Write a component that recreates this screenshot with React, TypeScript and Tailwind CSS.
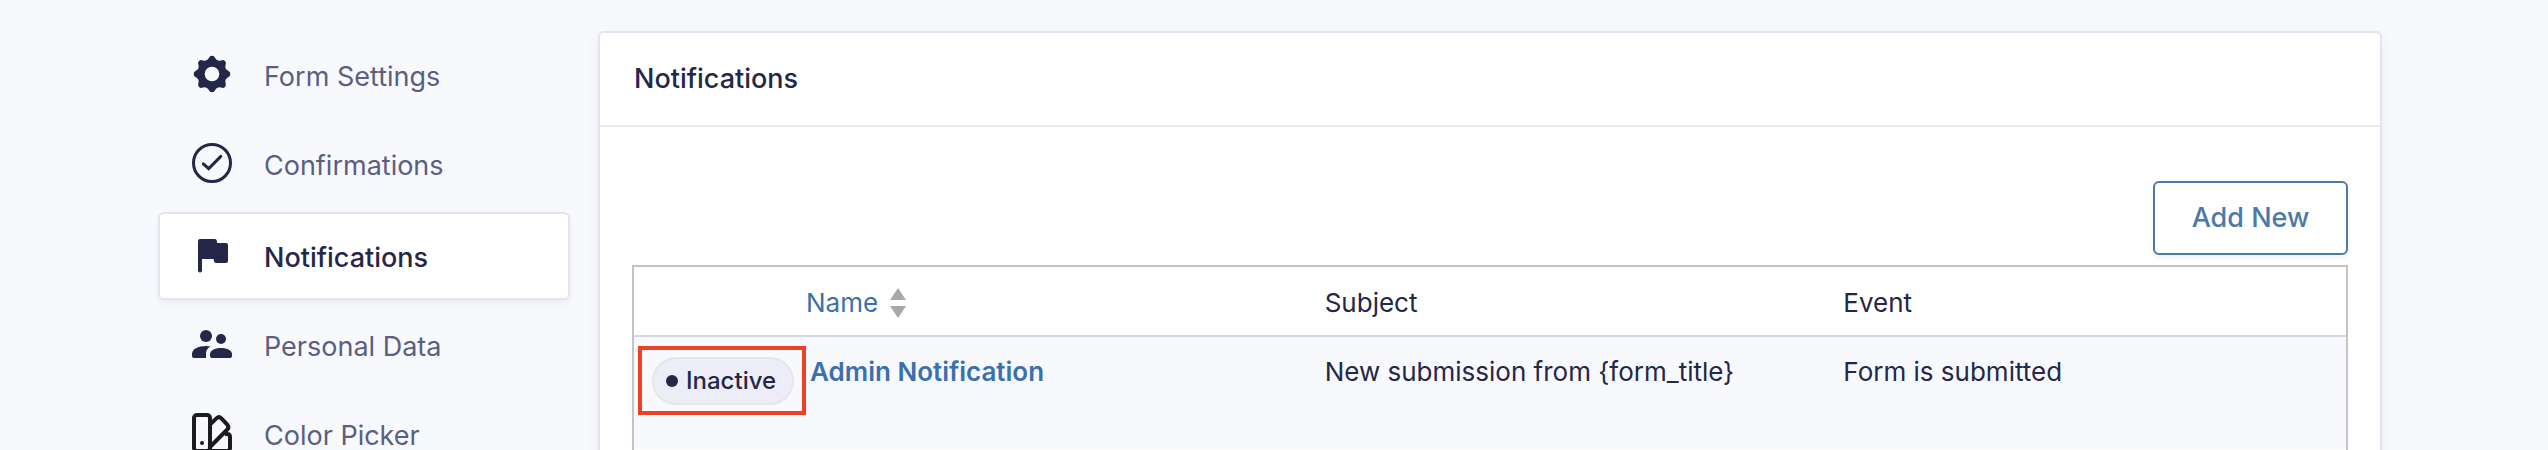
import { ReactNode } from "react";
import clsx from "clsx";

const GEAR_TEETH = 8;

const gearPath = () => {
  const point = (deg: number, r: number) => {
    const rad = (deg * Math.PI) / 180;
    return `${(24 + r * Math.sin(rad)).toFixed(2)} ${(23 - r * Math.cos(rad)).toFixed(2)}`;
  };
  let d = `M${point(-11, 16.4)}`;
  for (let i = 0; i < GEAR_TEETH; i++) {
    const a = i * 45;
    d += `A3.3 3.3 0 0 1 ${point(a + 11, 16.4)}Q${point(a + 22.5, 13.4)} ${point(a + 34, 16.4)}`;
  }
  return `${d}ZM24 15.7a7.3 7.3 0 1 0 0 14.6a7.3 7.3 0 1 0 0-14.6Z`;
};

const Icon = ({ children }: { children: ReactNode }) => (
  <svg viewBox="0 0 48 48" className="h-12 w-12 shrink-0 text-[#242748]" fill="currentColor" aria-hidden="true">
    {children}
  </svg>
);

const navItems = [
  {
    label: "Form Settings",
    icon: (
      <Icon>
        <path fillRule="evenodd" d={gearPath()} />
      </Icon>
    ),
  },
  {
    label: "Confirmations",
    icon: (
      <Icon>
        <g fill="none" stroke="currentColor" strokeWidth="3" strokeLinecap="round">
          <circle cx="24" cy="23" r="18.5" />
          <path d="M15.3 23.8L20.7 28.6L32.8 16.4" />
        </g>
      </Icon>
    ),
  },
  {
    label: "Notifications",
    active: true,
    icon: (
      <Icon>
        <path d="M12 7h15q1.5 0 1.8 1.5L29.2 11H38q2 0 2 2v16q0 2-2 2H28q-1.6 0-2-1.8L25.6 27H14v11.5a2 2 0 0 1-4 0V9q0-2 2-2z" />
      </Icon>
    ),
  },
  {
    label: "Personal Data",
    icon: (
      <Icon>
        <circle cx="18" cy="15" r="6" />
        <circle cx="33" cy="18" r="5" />
        <path d="M4 33C4 28 10 25 18 25q2.6 0 4.6.6Q18 28 18 33v4H6q-2 0-2-2z" />
        <path d="M22 33.5C22 29.5 26.5 27 33 27s11 2.5 11 6.5V35q0 2-2 2H24q-2 0-2-2z" />
      </Icon>
    ),
  },
  {
    label: "Color Picker",
    icon: (
      <Icon>
        <g fill="none" stroke="#1c1c1e" strokeWidth="4" strokeLinejoin="round">
          <path d="M37 24H39q3 0 3 3V38q0 3-3 3H19" />
          <path d="M21 38L39.3 19.5q2.2-2.3 0-4.8L33.4 8.4q-2.4-2.4-5 0L22 14.5" />
          <rect x="6" y="5" width="16" height="36" rx="3" />
        </g>
        <circle cx="14" cy="33" r="2" fill="#1c1c1e" />
      </Icon>
    ),
  },
];

const SettingsNav = () => (
  <nav className="flex w-[412px] shrink-0 flex-col gap-px">
    {navItems.map((item) => (
      <a
        key={item.label}
        href="#"
        aria-current={item.active ? "page" : undefined}
        className={clsx(
          "flex h-[88px] shrink-0 items-center gap-7 rounded-md border-2 pl-7 text-[27px] leading-9",
          item.active
            ? "mt-[3px] border-[#e2e4ef] bg-white font-medium text-[#242748] shadow-[0_4px_8px_rgba(36,39,72,0.05)]"
            : "border-transparent text-[#5b5e80]"
        )}
      >
        {item.icon}
        <span className="pt-1">{item.label}</span>
      </a>
    ))}
  </nav>
);

const SortArrows = () => (
  <svg viewBox="0 0 16 30" className="h-[30px] w-4" fill="#a7a8ab" aria-hidden="true">
    <path d="M8 0L16 12H0zM8 30L0 18H16z" />
  </svg>
);

const StatusBadge = () => (
  <div className="relative w-fit">
    <button
      type="button"
      className="flex h-12 w-[142px] items-center gap-2 rounded-full border-2 border-[#e6e6ea] bg-[#ecedf7] pl-3 text-2xl font-medium"
    >
      <span className="h-3 w-3 rounded-full bg-[#242748]" />
      Inactive
    </button>
    <span className="pointer-events-none absolute -top-[11px] -right-3 -bottom-[10px] -left-[14px] border-4 border-[#ee4023]" />
  </div>
);

const NotificationsTable = () => (
  <div className="border-2 border-[#c3c4c7] pb-[70px]">
    <table className="w-full table-fixed border-separate border-spacing-0 text-left text-[26px] leading-9">
      <thead>
        <tr className="h-[70px]">
          <th className="w-[156px] border-b-2 border-[#d5d7e9]" aria-label="Status" />
          <th className="border-b-2 border-[#d5d7e9] px-4 pt-[3px] font-normal">
            <a href="#" className="flex items-center gap-3 text-[#3a70ad]">
              Name
              <SortArrows />
            </a>
          </th>
          <th className="border-b-2 border-[#d5d7e9] px-4 pt-[3px] font-normal">Subject</th>
          <th className="border-b-2 border-[#d5d7e9] px-4 pt-[3px] font-normal">Event</th>
        </tr>
      </thead>
      <tbody>
        <tr className="h-28 bg-[#f8f9fd] align-top">
          <td className="pt-5 pl-[18px]">
            <StatusBadge />
          </td>
          <td className="px-5 pt-[17px]">
            <a href="#" className="font-semibold text-[#3a70ad]">
              Admin Notification
            </a>
          </td>
          <td className="px-4 pt-[17px]">New submission from {"{form_title}"}</td>
          <td className="px-4 pt-[17px]">Form is submitted</td>
        </tr>
      </tbody>
    </table>
  </div>
);

const App = () => (
  <div className="flex h-screen gap-7 overflow-hidden bg-[#f8f9fd] pt-[31px] pr-[166px] pl-[158px] font-['Inter',sans-serif] text-[#242748]">
    <SettingsNav />
    <main className="min-w-0 flex-1">
      <section className="rounded-md border-2 border-[#e2e4ef] bg-white shadow-[0_4px_16px_rgba(36,39,72,0.05)]">
        <header className="flex h-[94px] items-center border-b-2 border-[#e9eaf2] px-[34px]">
          <h1 className="text-[27px] leading-9 font-medium">Notifications</h1>
        </header>
        <div className="px-8 pt-[54px] pb-8">
          <div className="mb-[10px] flex justify-end">
            <button
              type="button"
              className="h-[74px] w-[195px] rounded-md border-2 border-[#4a7aa5] bg-white text-[27px] font-medium text-[#4a7aa5] shadow-[0_4px_4px_rgba(36,39,72,0.05)]"
            >
              Add New
            </button>
          </div>
          <NotificationsTable />
        </div>
      </section>
    </main>
  </div>
);

export default App;
